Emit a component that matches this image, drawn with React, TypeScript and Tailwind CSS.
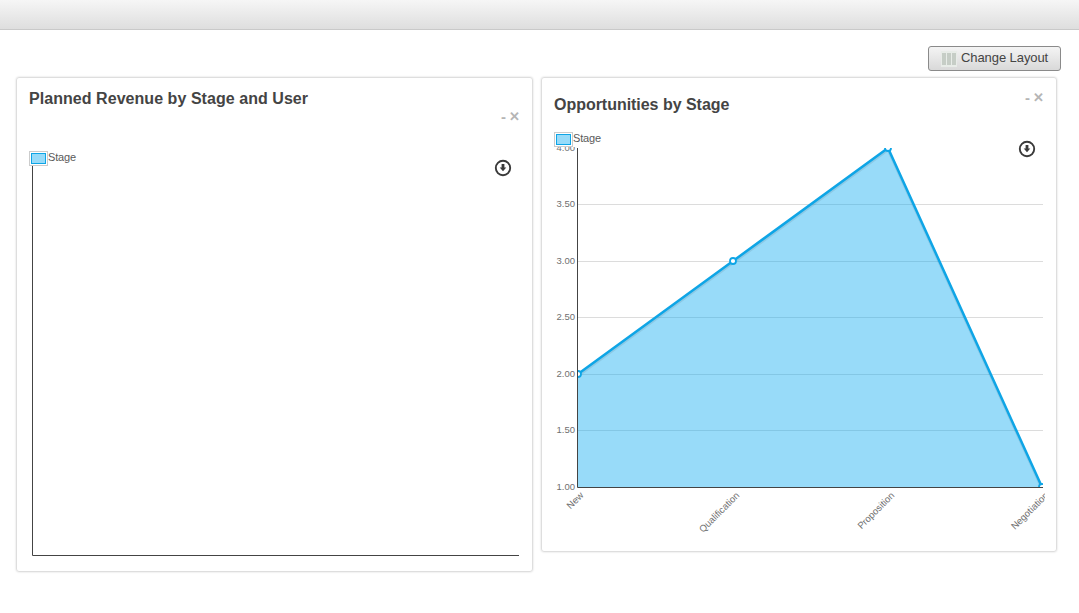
const font = "font-['Liberation_Sans',Arial,sans-serif]"

const points = [
  { x: 578, y: 374, label: "New", dx: 6 },
  { x: 733, y: 261, label: "Qualification", dx: 7 },
  { x: 888, y: 148, label: "Proposition", dx: 7 },
  { x: 1042, y: 487, label: "Negotiation", dx: 7 },
]
const ticks = [
  { y: 148, label: "4.00" },
  { y: 204, label: "3.50" },
  { y: 261, label: "3.00" },
  { y: 317, label: "2.50" },
  { y: 374, label: "2.00" },
  { y: 430, label: "1.50" },
  { y: 487, label: "1.00" },
]

function Legend() {
  return (
    <div className="absolute left-3 top-[3px] flex items-start bg-white">
      <div className="h-[15px] w-[19px] border border-[#ccc] p-px">
        <div className="h-full w-full border border-[#0ea5e6] bg-[#97dbf9]" />
      </div>
      <span className="text-[11px] leading-[13px] tracking-[-0.15px] text-[#5a5a5a]">Stage</span>
    </div>
  )
}

function DownloadIcon({ className }: { className: string }) {
  return (
    <svg width="18" height="18" viewBox="0 0 18 18" className={className}>
      <circle cx="9" cy="9" r="7.2" fill="#fff" stroke="#3a3a3a" strokeWidth="1.9" />
      <path d="M7.6 5h2.8v3.6h1.9L9 12.2 5.7 8.6h1.9z" fill="#3a3a3a" />
    </svg>
  )
}

function Controls() {
  return (
    <div className="flex items-center justify-end gap-[3px] font-bold leading-[18px] text-[#b5b5b5]">
      <span className="text-[15px]">-</span>
      <span className="text-[13px]">✕</span>
    </div>
  )
}

function EmptyChart() {
  return (
    <div className="relative mt-[22px] h-[414px]">
      <svg width="515" height="414" viewBox="17 148 515 414" className="block">
        <path d="M32.5 166V555.5H519" fill="none" stroke="#444" strokeWidth="1" />
      </svg>
      <Legend />
      <DownloadIcon className="absolute left-[477px] top-[11px]" />
    </div>
  )
}

function StageChart() {
  const line = points.map((p) => `${p.x},${p.y}`).join(" ")
  return (
    <div className="relative mt-[15px] h-[412px]">
      <svg width="514" height="412" viewBox="542 129 514 412" className="block">
        <defs>
          <clipPath id="plot">
            <rect x="577" y="148" width="466" height="340" />
          </clipPath>
          <clipPath id="labels">
            <rect x="542" y="488" width="503" height="53" />
          </clipPath>
        </defs>
        {ticks.slice(1, 6).map((t) => (
          <line key={t.y} x1="577" x2="1043" y1={t.y + 0.5} y2={t.y + 0.5} stroke="#dcdcdc" />
        ))}
        <g clipPath="url(#plot)">
          <polygon points={`578,487 ${line}`} fill="#0aa9f1" fillOpacity="0.42" />
          {/* soft shadow under the line */}
          <polyline points={line} fill="none" stroke="#000" strokeOpacity="0.08" strokeWidth="2.5" transform="translate(0 2)" />
          <polyline points={line} fill="none" stroke="#0ea5e6" strokeWidth="2.5" />
          {points.map((p) => (
            <circle key={p.label} cx={p.x} cy={p.y} r="3" fill="#fff" stroke="#0ea5e6" strokeWidth="1.8" />
          ))}
        </g>
        <path d="M577.5 148V487.5H1043" fill="none" stroke="#444" strokeWidth="1" />
        {ticks.map((t) => (
          <text key={t.y} x="575" y={t.y + 3} textAnchor="end" fontSize="9.5" fill="#707070" fontFamily="'Liberation Sans', Arial, sans-serif">
            {t.label}
          </text>
        ))}
        <g clipPath="url(#labels)">
          {points.map((p) => (
            <text
              key={p.label}
              x={p.x + p.dx}
              y={496}
              textAnchor="end"
              fontSize="9.5"
              fill="#707070"
              fontFamily="'Liberation Sans', Arial, sans-serif"
              transform={`rotate(-45 ${p.x + p.dx} 496)`}
            >
              {p.label}
            </text>
          ))}
        </g>
      </svg>
      <Legend />
      <DownloadIcon className="absolute left-[476px] top-[11px]" />
    </div>
  )
}

export default function App() {
  return (
    <div className={`${font} min-h-[613px] bg-white`}>
      <div className="h-[30px] border-b border-[#c9c9c9] bg-gradient-to-b from-[#f6f6f6] to-[#dedede]" />

      <div className="flex justify-end pr-[18px] pt-4">
        <button className="flex h-[25px] w-[133px] items-center gap-1 rounded-[3px] border border-[#8a8a8a] bg-gradient-to-b from-[#f4f4f4] to-[#d9d9d9] pl-3 text-[13px] text-[#444]">
          <span className="flex h-4 w-4 gap-px bg-[#e8ece8] px-px py-0.5">
            <span className="flex-1 bg-[#c6cdc6]" />
            <span className="flex-1 bg-[#c6cdc6]" />
            <span className="flex-1 bg-[#c6cdc6]" />
          </span>
          <span className="pb-0.5 tracking-[-0.08px]">Change Layout</span>
        </button>
      </div>

      <div className="mt-1.5 flex items-start gap-2 pl-4">
        <section className="w-[517px] rounded-[3px] border border-[#dedede] pb-[9px] pt-3 shadow-[0_0_2px_rgba(0,0,0,0.18)]">
          <h2 className="px-3 text-base font-bold leading-[18px] tracking-[0.05px] text-[#444]">Planned Revenue by Stage and User</h2>
          <div className="pr-3">
            <Controls />
          </div>
          <EmptyChart />
        </section>

        <section className="relative w-[516px] rounded-[3px] border border-[#dedede] pb-2.5 pt-[18px] shadow-[0_0_2px_rgba(0,0,0,0.18)]">
          <h2 className="px-3 text-base font-bold leading-[18px] tracking-[-0.03px] text-[#444]">Opportunities by Stage</h2>
          <div className="absolute right-3 top-[11px]">
            <Controls />
          </div>
          <StageChart />
        </section>
      </div>
    </div>
  )
}
